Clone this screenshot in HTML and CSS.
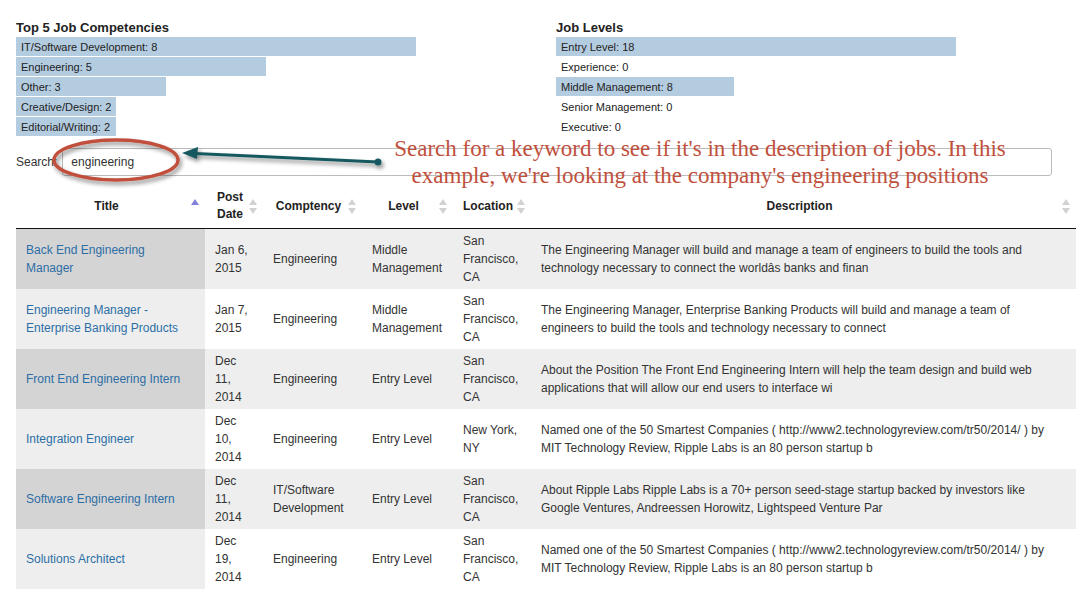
FILE: index.html
```html
<!DOCTYPE html>
<html>
<head>
<meta charset="utf-8">
<title>Jobs</title>
<link rel="stylesheet" href="styles.css">
</head>
<body>
<div class="page">
  <div class="charts">
    <div class="chart chart-left">
      <div class="chart-title">Top 5 Job Competencies</div>
      <div class="bar" style="width:400px">IT/Software Development: 8</div>
      <div class="bar" style="width:250px">Engineering: 5</div>
      <div class="bar" style="width:150px">Other: 3</div>
      <div class="bar" style="width:100px">Creative/Design: 2</div>
      <div class="bar" style="width:100px">Editorial/Writing: 2</div>
    </div>
    <div class="chart">
      <div class="chart-title">Job Levels</div>
      <div class="bar" style="width:400px">Entry Level: 18</div>
      <div class="bar empty">Experience: 0</div>
      <div class="bar" style="width:178px">Middle Management: 8</div>
      <div class="bar empty">Senior Management: 0</div>
      <div class="bar empty">Executive: 0</div>
    </div>
  </div>

  <div class="search">
    <label class="search-label">Search:</label>
    <input class="search-input" type="text" value="engineering">
  </div>

  <table class="jobs">
    <colgroup>
      <col class="c-title"><col class="c-date"><col class="c-comp"><col class="c-level"><col class="c-loc"><col class="c-desc">
    </colgroup>
    <thead>
      <tr>
        <th class="th-title">Title<span class="sort asc"></span></th>
        <th>Post Date<span class="sort"></span></th>
        <th>Comptency<span class="sort"></span></th>
        <th>Level<span class="sort"></span></th>
        <th>Location<span class="sort"></span></th>
        <th>Description<span class="sort"></span></th>
      </tr>
    </thead>
    <tbody>
      <tr class="odd">
        <td class="title"><a href="#">Back End Engineering Manager</a></td>
        <td>Jan 6, 2015</td>
        <td>Engineering</td>
        <td>Middle Management</td>
        <td>San Francisco, CA</td>
        <td class="desc">The Engineering Manager will build and manage a team of engineers to build the tools and technology necessary to connect the worldâs banks and finan</td>
      </tr>
      <tr class="even">
        <td class="title"><a href="#">Engineering Manager - Enterprise Banking Products</a></td>
        <td>Jan 7, 2015</td>
        <td>Engineering</td>
        <td>Middle Management</td>
        <td>San Francisco, CA</td>
        <td class="desc">The Engineering Manager, Enterprise Banking Products will build and manage a team of engineers to build the tools and technology necessary to connect</td>
      </tr>
      <tr class="odd">
        <td class="title"><a href="#">Front End Engineering Intern</a></td>
        <td>Dec 11, 2014</td>
        <td>Engineering</td>
        <td>Entry Level</td>
        <td>San Francisco, CA</td>
        <td class="desc">About the Position The Front End Engineering Intern will help the team design and build web applications that will allow our end users to interface wi</td>
      </tr>
      <tr class="even">
        <td class="title"><a href="#">Integration Engineer</a></td>
        <td>Dec 10, 2014</td>
        <td>Engineering</td>
        <td>Entry Level</td>
        <td>New York, NY</td>
        <td class="desc">Named one of the 50 Smartest Companies ( http://www2.technologyreview.com/tr50/2014/ ) by MIT Technology Review, Ripple Labs is an 80 person startup b</td>
      </tr>
      <tr class="odd">
        <td class="title"><a href="#">Software Engineering Intern</a></td>
        <td>Dec 11, 2014</td>
        <td>IT/Software Development</td>
        <td>Entry Level</td>
        <td>San Francisco, CA</td>
        <td class="desc">About Ripple Labs Ripple Labs is a 70+ person seed-stage startup backed by investors like Google Ventures, Andreessen Horowitz, Lightspeed Venture Par</td>
      </tr>
      <tr class="even">
        <td class="title"><a href="#">Solutions Architect</a></td>
        <td>Dec 19, 2014</td>
        <td>Engineering</td>
        <td>Entry Level</td>
        <td>San Francisco, CA</td>
        <td class="desc">Named one of the 50 Smartest Companies ( http://www2.technologyreview.com/tr50/2014/ ) by MIT Technology Review, Ripple Labs is an 80 person startup b</td>
      </tr>
    </tbody>
  </table>

  <svg class="markup" width="1088" height="200" viewBox="0 0 1088 200" xmlns="http://www.w3.org/2000/svg">
    <defs>
      <filter id="shadow" x="-20%" y="-40%" width="140%" height="180%">
        <feDropShadow dx="2" dy="3" stdDeviation="2" flood-color="#000" flood-opacity="0.45"/>
      </filter>
    </defs>
    <ellipse cx="116" cy="160" rx="62" ry="20" fill="none" stroke="#c0503c" stroke-width="3.5" filter="url(#shadow)"/>
    <g filter="url(#shadow)">
      <line x1="378" y1="162" x2="195" y2="153.5" stroke="#17595e" stroke-width="3"/>
      <circle cx="378" cy="162" r="3.5" fill="#17595e"/>
      <polygon points="182,153 198,147 197,159" fill="#17595e"/>
    </g>
  </svg>
  <div class="note">Search for a keyword to see if it's in the description of jobs. In this<br>example, we're looking at the company's engineering positions</div>
</div>
</body>
</html>
```

FILE: styles.css
```css
html, body {
  margin: 0;
  padding: 0;
  background: #fff;
}

.page {
  position: relative;
  width: 1088px;
  height: 598px;
  box-sizing: border-box;
  padding: 20px 12px 0 16px;
  font-family: "Liberation Sans", Arial, sans-serif;
  color: #333;
  overflow: hidden;
}

.charts {
  display: flex;
}

.chart {
  display: flex;
  flex-direction: column;
  align-items: flex-start;
}

.chart-left {
  width: 540px;
}

.chart-title {
  font-size: 13px;
  font-weight: bold;
  line-height: 16px;
  color: #222;
  margin-bottom: 1px;
}

.bar {
  box-sizing: border-box;
  height: 19px;
  line-height: 20px;
  margin-bottom: 1px;
  padding-left: 5px;
  font-size: 11px;
  color: #222;
  background: #b4cce0;
  white-space: nowrap;
}

.bar.empty {
  background: transparent;
}

.search {
  display: flex;
  align-items: center;
  margin-top: 11px;
  margin-right: 24px;
}

.search-label {
  font-size: 12px;
  color: #333;
  margin-right: 5px;
}

.search-input {
  flex: 1;
  box-sizing: border-box;
  height: 28px;
  border: 1px solid #bbb;
  border-radius: 3px;
  padding: 0 8px;
  font-family: "Liberation Sans", Arial, sans-serif;
  font-size: 12px;
  color: #333;
  outline: none;
}

.jobs {
  width: 1060px;
  margin-top: 10px;
  border-collapse: collapse;
  table-layout: fixed;
  font-size: 12px;
}

.c-title { width: 189px; }
.c-date { width: 58px; }
.c-comp { width: 99px; }
.c-level { width: 91px; }
.c-loc { width: 78px; }
.c-desc { width: 545px; }

.jobs th {
  position: relative;
  padding: 3px 18px 5px 10px;
  font-weight: bold;
  line-height: 17px;
  text-align: center;
  color: #222;
  border-bottom: 1px solid #111;
}

.jobs td {
  padding: 3px 8px 3px 10px;
  line-height: 18px;
  vertical-align: middle;
  color: #333;
}

.jobs td.title {
  padding-right: 14px;
}

.jobs td.desc {
  padding-right: 22px;
}

.jobs td a {
  color: #2c6ea6;
  text-decoration: none;
}

.jobs tr.odd td { background: #eeeeee; }
.jobs tr.odd td.title { background: #d4d4d4; }
.jobs tr.even td { background: #ffffff; }
.jobs tr.even td.title { background: #eeeeee; }

.jobs tbody tr {
  height: 60px;
}

.sort {
  position: absolute;
  right: 6px;
  top: 50%;
  width: 8px;
  height: 15px;
  margin-top: -8px;
}

.sort::before,
.sort::after {
  content: "";
  position: absolute;
  left: 0;
  border-left: 4px solid transparent;
  border-right: 4px solid transparent;
}

.sort::before {
  top: 0;
  border-bottom: 6px solid #d2d2d2;
}

.sort::after {
  bottom: 0;
  border-top: 6px solid #d2d2d2;
}

.sort.asc::before {
  border-bottom-color: #8282dc;
}

.sort.asc::after {
  border-top-color: transparent;
}

.markup {
  position: absolute;
  left: 0;
  top: 0;
  pointer-events: none;
}

.note {
  position: absolute;
  left: 340px;
  top: 135px;
  width: 720px;
  text-align: center;
  font-family: "Liberation Serif", "Times New Roman", serif;
  font-size: 23px;
  line-height: 27px;
  color: #c0503c;
}
```
